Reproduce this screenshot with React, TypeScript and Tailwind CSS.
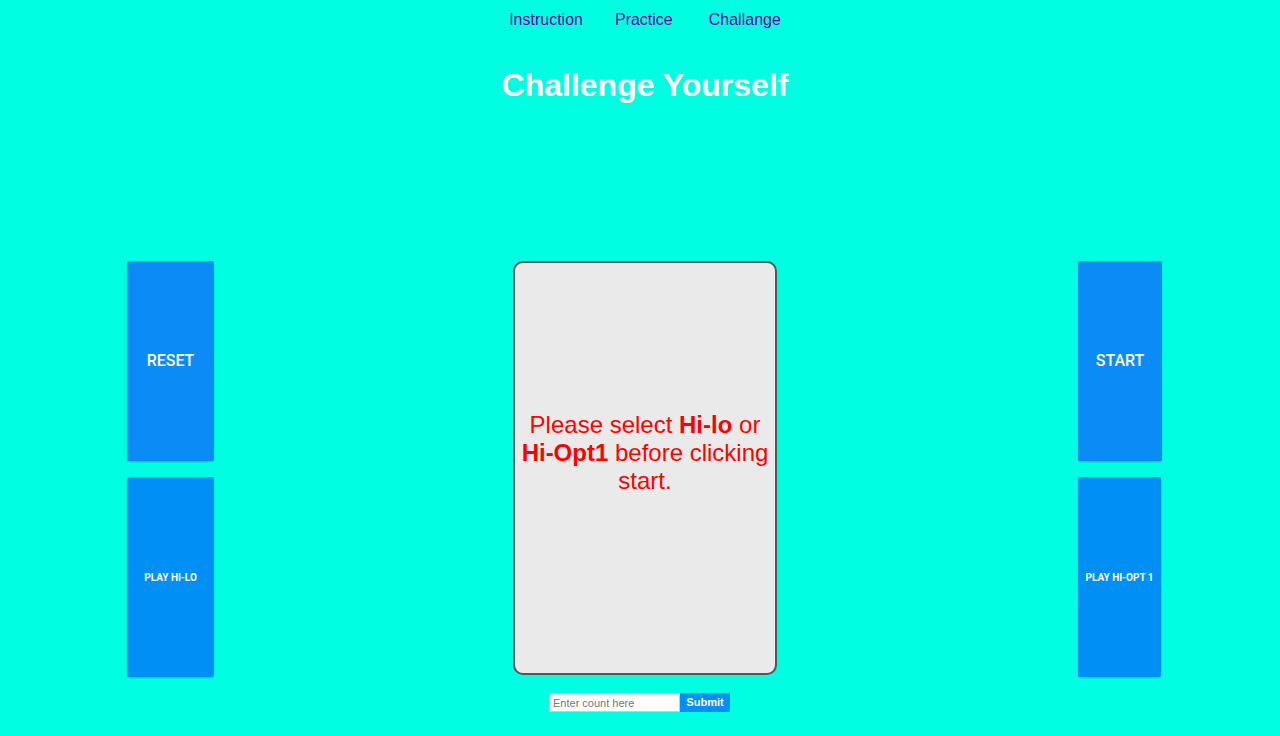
export default function App() {
  return (
    <div className="w-[1280px] h-[736px] bg-[#00ffe2] overflow-hidden" style={{ fontFamily: '"Liberation Sans", Arial, sans-serif' }}>
      <nav className="flex justify-center pt-[10px] h-[20px] text-[16px] leading-[20px] text-[#660099]">
        <div className="flex pl-[10px]">
          <a className="">Instruction</a>
          <a className="ml-[32px]">Practice</a>
          <a className="ml-[36px]">Challange</a>
        </div>
      </nav>
      <h1 className="mt-[45px] text-center text-white font-bold text-[32px] leading-[40px] pl-[10px]">Challenge Yourself</h1>
      <div className="mt-[156px] flex items-start pl-[127px]">
        <div className="flex flex-col gap-[16px] w-[87px]">
          <button className="h-[200px] w-[87px] rounded-[2px] bg-[#0a8bf5] text-white text-[16px] font-medium shadow-[0_1px_2px_rgba(0,0,0,0.2)]" style={{ fontFamily: 'Roboto, sans-serif' }}>RESET</button>
          <button className="h-[200px] w-[87px] rounded-[2px] bg-[#0090f5] text-white text-[10px] font-bold shadow-[0_1px_2px_rgba(0,0,0,0.2)]" style={{ fontFamily: 'Roboto, sans-serif' }}>PLAY HI-LO</button>
        </div>
        <div className="ml-[299px] w-[264px] h-[414px] rounded-[10px] border-2 border-[#555] bg-[#eaeaea] flex items-center justify-center px-[4px]">
          <p className="text-[#ff0000] text-[24px] leading-[28px] text-center mb-[30px]">
            Please select <b>Hi-lo</b> or <b>Hi-Opt1</b> before clicking start.
          </p>
        </div>
        <div className="ml-[301px] flex flex-col gap-[16px] w-[84px]">
          <button className="h-[200px] w-[84px] rounded-[2px] bg-[#0a8bf5] text-white text-[16px] font-medium shadow-[0_1px_2px_rgba(0,0,0,0.2)]" style={{ fontFamily: 'Roboto, sans-serif' }}>START</button>
          <button className="h-[200px] w-[83px] rounded-[2px] bg-[#0090f5] text-white text-[10px] font-bold shadow-[0_1px_2px_rgba(0,0,0,0.2)] whitespace-nowrap" style={{ fontFamily: 'Roboto, sans-serif' }}>PLAY HI-OPT 1</button>
        </div>
      </div>
      <div className="mt-[16px] flex justify-center">
        <div className="flex ml-[-1px]">
          <input placeholder="Enter count here" className="w-[131px] h-[19px] bg-white border border-[#ccc] text-[11px] px-[3px] placeholder:text-[#777] outline-none" />
          <button className="w-[50px] h-[19px] bg-[#0090f5] text-white text-[11px] font-bold">Submit</button>
        </div>
      </div>
    </div>
  );
}
